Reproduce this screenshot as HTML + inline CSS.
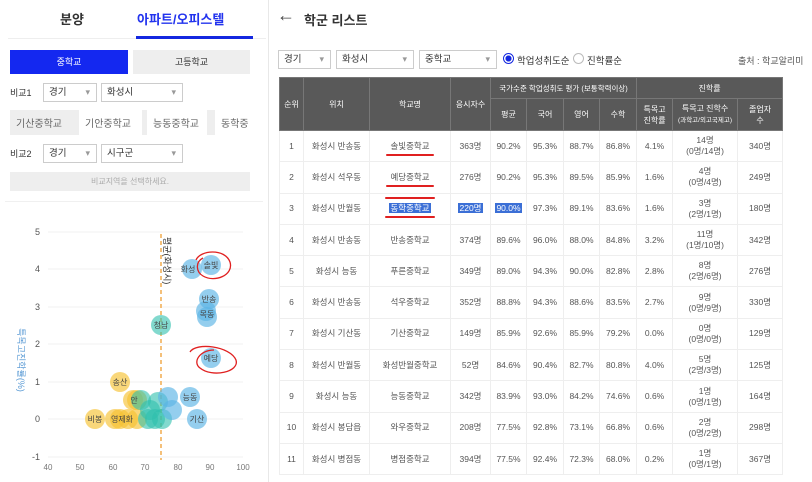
<!DOCTYPE html>
<html><head><meta charset="utf-8"><style>
*{margin:0;padding:0;box-sizing:border-box}
body{width:812px;height:482px;overflow:hidden;background:#fff;font-family:"Liberation Sans","Noto Sans CJK KR",sans-serif;color:#444;position:relative}
.a{position:absolute}
.sel{position:absolute;height:19px;border:1px solid #ccc;background:#fff;font-size:9.5px;line-height:17px;padding-left:5px;color:#333}
.sel:after{content:"▾";position:absolute;right:6px;top:0;color:#999;font-size:9px}
table{position:absolute;left:279px;top:77px;border-collapse:collapse;table-layout:fixed;width:503px;font-size:8.5px}
th{background:#595959;color:#fff;font-weight:normal;border:1px solid #777;text-align:center;line-height:11px;font-size:8px;white-space:nowrap}
td{border:1px solid #eee;text-align:center;color:#555;height:31.3px;line-height:11px;white-space:nowrap}
.hl{background:#3b6fd6;color:#fff;padding:0 1px}
.ul{position:relative}
.ul:after{content:"";position:absolute;left:-4px;right:-4px;bottom:-5px;height:2px;background:#e02020;border-radius:2px}
.ul2:before{content:"";position:absolute;left:-4px;right:-4px;top:-6px;height:2px;background:#e02020;border-radius:2px}
</style></head><body>
<div class="a" style="left:60px;top:9px;font-size:13px;font-weight:bold;color:#333">분양</div>
<div class="a" style="left:137px;top:9px;font-size:13px;font-weight:bold;color:#2233ee">아파트/오피스텔</div>
<div class="a" style="left:8px;top:38px;width:258px;height:1px;background:#eee"></div>
<div class="a" style="left:136px;top:36px;width:117px;height:3px;background:#1428e0"></div>
<div class="a" style="left:10px;top:50px;width:118px;height:24px;background:#1428f0;color:#fff;font-size:9px;text-align:center;line-height:24px">중학교</div>
<div class="a" style="left:133px;top:50px;width:117px;height:24px;background:#eee;color:#333;font-size:9px;text-align:center;line-height:24px">고등학교</div>
<div class="a" style="left:10px;top:86px;font-size:9px;color:#333">비교1</div>
<div class="sel" style="left:43px;top:83px;width:54px">경기</div>
<div class="sel" style="left:101px;top:83px;width:82px">화성시</div>
<div class="a" style="left:10px;top:110px;width:240px;height:25px;background:#eee;overflow:hidden;font-size:10px;color:#666">
<span class="a" style="left:6px;top:5px">기산중학교</span><span class="a" style="left:69px;top:0;width:63px;height:25px;background:#fff"></span><span class="a" style="left:75px;top:5px">기안중학교</span><span class="a" style="left:137px;top:0;width:60px;height:25px;background:#fff"></span><span class="a" style="left:143px;top:5px">능동중학교</span><span class="a" style="left:205px;top:0;width:40px;height:25px;background:#fff"></span><span class="a" style="left:211px;top:5px">동학중</span></div>
<div class="a" style="left:10px;top:147px;font-size:9px;color:#333">비교2</div>
<div class="sel" style="left:43px;top:144px;width:54px">경기</div>
<div class="sel" style="left:101px;top:144px;width:82px">시구군</div>
<div class="a" style="left:10px;top:172px;width:240px;height:19px;background:#eee;color:#aaa;font-size:8px;text-align:center;line-height:19px">비교지역을 선택하세요.</div>
<div class="a" style="left:5px;top:201px;width:258px;height:1px;background:#f0f0f0"></div>
<div class="a" style="left:268px;top:0;width:1px;height:482px;background:#e8e8e8"></div>
<svg class="a" style="left:0;top:0" width="268" height="482" font-family="Liberation Sans,Noto Sans CJK KR,sans-serif">
<g stroke="#f2f2f2"><line x1="48" x2="243" y1="232" y2="232"/><line x1="48" x2="243" y1="269" y2="269"/><line x1="48" x2="243" y1="307" y2="307"/><line x1="48" x2="243" y1="344" y2="344"/><line x1="48" x2="243" y1="382" y2="382"/><line x1="48" x2="243" y1="419" y2="419"/><line x1="48" x2="243" y1="457" y2="457"/></g>
<g font-size="9" fill="#555" text-anchor="end"><text x="40" y="235">5</text><text x="40" y="272">4</text><text x="40" y="310">3</text><text x="40" y="347">2</text><text x="40" y="385">1</text><text x="40" y="422">0</text><text x="40" y="460">-1</text></g>
<g font-size="8" fill="#777" text-anchor="middle"><text x="48" y="470">40</text><text x="80" y="470">50</text><text x="113" y="470">60</text><text x="145" y="470">70</text><text x="178" y="470">80</text><text x="210" y="470">90</text><text x="243" y="470">100</text></g>
<text transform="translate(18,360) rotate(90)" font-size="9" fill="#5b9bd5" text-anchor="middle">특목고진학률(%)</text>
<line x1="161" y1="234" x2="161" y2="460" stroke="#f4c07a" stroke-width="2" stroke-dasharray="4,3"/>
<text transform="translate(164,237) rotate(90)" font-size="9" fill="#333">평균(화성시)</text>
<g fill="#f6c233" fill-opacity=".65">
<circle cx="120" cy="382" r="10"/><circle cx="95" cy="419" r="10"/><circle cx="115" cy="419" r="10"/><circle cx="120" cy="419" r="10"/><circle cx="128" cy="419" r="10"/><circle cx="137" cy="419" r="10"/><circle cx="133" cy="400" r="10"/><circle cx="137" cy="400" r="10"/></g>
<g fill="#2ebfae" fill-opacity=".6">
<circle cx="161" cy="325" r="10"/><circle cx="141" cy="400" r="10"/><circle cx="150" cy="410" r="10"/><circle cx="155" cy="419" r="10"/><circle cx="162" cy="419" r="10"/><circle cx="158" cy="402" r="10"/><circle cx="148" cy="419" r="10"/></g>
<g fill="#5ab4e5" fill-opacity=".65">
<circle cx="192" cy="269" r="10"/><circle cx="211" cy="265" r="10"/><circle cx="209" cy="299" r="10"/><circle cx="206" cy="311" r="10"/><circle cx="207" cy="317" r="10"/><circle cx="211" cy="358" r="10"/><circle cx="190" cy="397" r="10"/><circle cx="197" cy="419" r="10"/><circle cx="168" cy="397" r="10"/><circle cx="172" cy="410" r="10"/></g>
<g font-size="8" fill="#444" text-anchor="middle"><text x="188" y="272">화성</text><text x="211" y="268">솔빛</text><text x="209" y="302">반송</text><text x="207" y="317">목동</text><text x="161" y="328">청남</text><text x="211" y="361">예당</text><text x="120" y="385">송산</text><text x="190" y="400">능동</text><text x="197" y="422">기산</text><text x="95" y="422">비봉</text><text x="122" y="422">영제화</text><text x="134" y="403">안</text></g>
<path d="M196 260 C200 250,225 248,230 262 C234 275,215 283,203 276 C196 272,195 262,203 258" fill="none" stroke="#e02020" stroke-width="1.3"/>
<path d="M190 352 C196 342,230 346,236 360 C240 372,212 378,200 368 C192 362,200 350,214 350" fill="none" stroke="#e02020" stroke-width="1.3"/>
</svg>
<div class="a" style="left:277px;top:5px;font-size:18px;color:#444">←</div>
<div class="a" style="left:304px;top:10px;font-size:13px;font-weight:bold;color:#333">학군 리스트</div>
<div class="sel" style="left:278px;top:50px;width:53px">경기</div>
<div class="sel" style="left:336px;top:50px;width:78px">화성시</div>
<div class="sel" style="left:419px;top:50px;width:78px">중학교</div>
<div class="a" style="left:503px;top:53px;width:11px;height:11px;border-radius:50%;border:1px solid #1428e0;background:radial-gradient(#1428e0 45%,#fff 50%)"></div>
<div class="a" style="left:517px;top:53px;font-size:9.5px;color:#333">학업성취도순</div>
<div class="a" style="left:573px;top:53px;width:11px;height:11px;border-radius:50%;border:1px solid #bbb"></div>
<div class="a" style="left:587px;top:53px;font-size:9.5px;color:#333">진학률순</div>
<div class="a" style="left:738px;top:54px;font-size:9px;color:#555">출처 : 학교알리미</div>
<table>
<colgroup><col style="width:24px"><col style="width:66px"><col style="width:81px"><col style="width:40px"><col style="width:36px"><col style="width:37px"><col style="width:36px"><col style="width:37px"><col style="width:36px"><col style="width:65px"><col style="width:45px"></colgroup>
<tr style="height:21px"><th rowspan="2">순위</th><th rowspan="2">위치</th><th rowspan="2">학교명</th><th rowspan="2">응시자수</th><th colspan="4" style="font-size:7.5px">국가수준 학업성취도 평가 (보통학력이상)</th><th colspan="3">진학률</th></tr>
<tr style="height:32px"><th>평균</th><th>국어</th><th>영어</th><th>수학</th><th>특목고<br>진학률</th><th>특목고 진학수<br><span style="font-size:6.5px">(과학고/외고국제고)</span></th><th>졸업자<br>수</th></tr>
<tr><td>1</td><td>화성시 반송동</td><td><span class="ul">솔빛중학교</span></td><td>363명</td><td>90.2%</td><td>95.3%</td><td>88.7%</td><td>86.8%</td><td>4.1%</td><td>14명<br>(0명/14명)</td><td>340명</td></tr>
<tr><td>2</td><td>화성시 석우동</td><td><span class="ul">예당중학교</span></td><td>276명</td><td>90.2%</td><td>95.3%</td><td>89.5%</td><td>85.9%</td><td>1.6%</td><td>4명<br>(0명/4명)</td><td>249명</td></tr>
<tr><td>3</td><td>화성시 반월동</td><td><span class="ul ul2"><span class="hl">동학중학교</span></span></td><td><span class="hl">220명</span></td><td><span class="hl">90.0%</span></td><td>97.3%</td><td>89.1%</td><td>83.6%</td><td>1.6%</td><td>3명<br>(2명/1명)</td><td>180명</td></tr>
<tr><td>4</td><td>화성시 반송동</td><td>반송중학교</td><td>374명</td><td>89.6%</td><td>96.0%</td><td>88.0%</td><td>84.8%</td><td>3.2%</td><td>11명<br>(1명/10명)</td><td>342명</td></tr>
<tr><td>5</td><td>화성시 능동</td><td>푸른중학교</td><td>349명</td><td>89.0%</td><td>94.3%</td><td>90.0%</td><td>82.8%</td><td>2.8%</td><td>8명<br>(2명/6명)</td><td>276명</td></tr>
<tr><td>6</td><td>화성시 반송동</td><td>석우중학교</td><td>352명</td><td>88.8%</td><td>94.3%</td><td>88.6%</td><td>83.5%</td><td>2.7%</td><td>9명<br>(0명/9명)</td><td>330명</td></tr>
<tr><td>7</td><td>화성시 기산동</td><td>기산중학교</td><td>149명</td><td>85.9%</td><td>92.6%</td><td>85.9%</td><td>79.2%</td><td>0.0%</td><td>0명<br>(0명/0명)</td><td>129명</td></tr>
<tr><td>8</td><td>화성시 반월동</td><td>화성반월중학교</td><td>52명</td><td>84.6%</td><td>90.4%</td><td>82.7%</td><td>80.8%</td><td>4.0%</td><td>5명<br>(2명/3명)</td><td>125명</td></tr>
<tr><td>9</td><td>화성시 능동</td><td>능동중학교</td><td>342명</td><td>83.9%</td><td>93.0%</td><td>84.2%</td><td>74.6%</td><td>0.6%</td><td>1명<br>(0명/1명)</td><td>164명</td></tr>
<tr><td>10</td><td>화성시 봉담읍</td><td>와우중학교</td><td>208명</td><td>77.5%</td><td>92.8%</td><td>73.1%</td><td>66.8%</td><td>0.6%</td><td>2명<br>(0명/2명)</td><td>298명</td></tr>
<tr><td>11</td><td>화성시 병점동</td><td>병점중학교</td><td>394명</td><td>77.5%</td><td>92.4%</td><td>72.3%</td><td>68.0%</td><td>0.2%</td><td>1명<br>(0명/1명)</td><td>367명</td></tr>
</table>
</body></html>
